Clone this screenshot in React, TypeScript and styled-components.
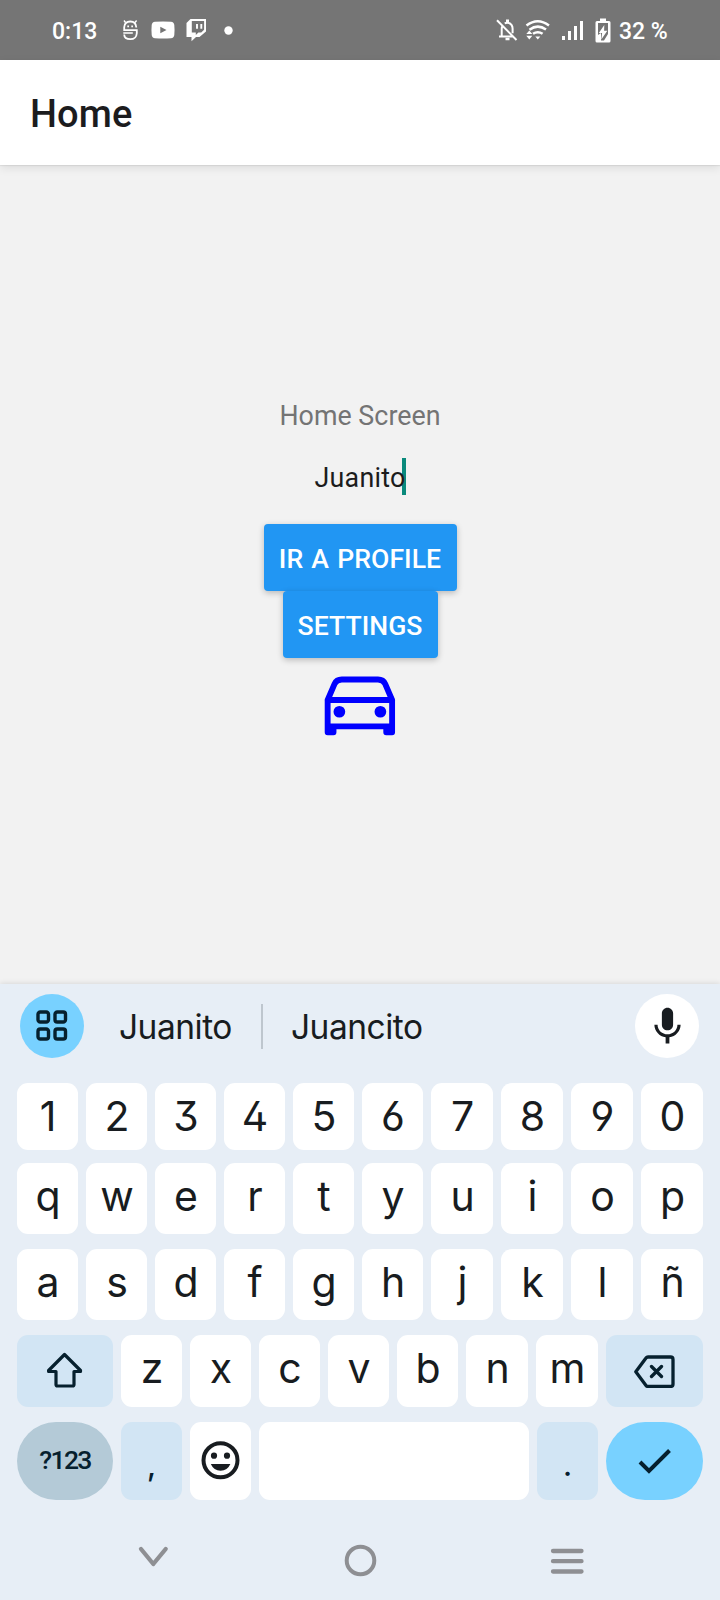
import React from "react";
import styled, { createGlobalStyle } from "styled-components";
import { IoCarOutline } from "react-icons/io5";
import { MdMic } from "react-icons/md";

const GlobalStyle = createGlobalStyle`
  * { box-sizing: border-box; }
  body { margin: 0; background: #f2f2f2; }
  svg { display: block; flex: none; }
`;

const Phone = styled.div`
  width: 720px;
  height: 1600px;
  display: flex;
  flex-direction: column;
  overflow: hidden;
  background: #f2f2f2;
  font-family: Roboto, "Liberation Sans", sans-serif;
`;

const StatusBar = styled.div`
  height: 60px;
  flex: none;
  display: flex;
  align-items: center;
  justify-content: space-between;
  padding: 2px 53px 0 52px;
  background: #757575;
  color: #fff;
  font-size: 23px;
  font-weight: 500;
  white-space: pre;
`;

const StatusGroup = styled.div`
  display: flex;
  align-items: center;
`;

const StatusText = styled.span<{ $width: number; $start?: number }>`
  width: ${(p) => p.$width}px;
  padding-left: ${(p) => p.$start ?? 0}px;
  padding-top: 1px;
  line-height: 28px;
`;

const StatusGlyph = styled.svg<{ $gap: number }>`
  margin-left: ${(p) => p.$gap}px;
  margin-top: -2px;
`;

const Header = styled.header`
  position: relative;
  height: 105px;
  flex: none;
  display: flex;
  align-items: center;
  padding: 2px 30px 0;
  background: #fff;
  box-shadow: 0 1px 1px rgba(0, 0, 0, 0.06), 0 3px 9px rgba(0, 0, 0, 0.09);
`;

const Title = styled.h1`
  margin: 0;
  font-size: 38px;
  font-weight: 500;
  line-height: 48px;
  letter-spacing: 0.15px;
  color: #1c1c1e;
`;

const Content = styled.main`
  height: 819px;
  flex: none;
  display: flex;
  flex-direction: column;
  align-items: center;
  padding-top: 234px;
`;

const Caption = styled.p`
  margin: 0;
  font-size: 26.8px;
  line-height: 35px;
  letter-spacing: 0.04px;
  color: #747474;
`;

const Field = styled.div`
  display: flex;
  align-items: center;
  height: 61px;
  margin: 12px 0 17px;
  font-size: 26.8px;
  letter-spacing: 0.25px;
  color: #1c1c1c;
`;

const FieldText = styled.span`
  position: relative;
  z-index: 1;
  padding-top: 2px;
  line-height: 36px;
`;

const Caret = styled.span`
  width: 4px;
  height: 37px;
  margin-left: -4px;
  background: #0a8a7c;
`;

const ActionButton = styled.button<{ $width: number }>`
  width: ${(p) => p.$width}px;
  height: 67px;
  flex: none;
  padding: 2px 0 0;
  border: 0;
  border-radius: 4px;
  background: #2196f3;
  box-shadow: 0 2px 6px rgba(0, 0, 0, 0.24);
  color: #fff;
  font: 500 26.6px/32px Roboto, sans-serif;
  letter-spacing: 0.05px;
  word-spacing: 1.5px;
  white-space: nowrap;
`;

const CarIcon = styled(IoCarOutline)`
  margin-top: 1px;
  color: #0000ff;
`;

const Keyboard = styled.section`
  position: relative;
  flex: 1;
  display: flex;
  flex-direction: column;
  background: #e7eef6;
  box-shadow: 0 -1px 5px rgba(0, 0, 0, 0.1);
  color: #181c20;
  font-family: Inter, Roboto, sans-serif;
`;

const SuggestionBar = styled.div`
  height: 99px;
  flex: none;
  display: flex;
  align-items: flex-start;
  padding: 10px 21px 0 20px;
`;

const RoundButton = styled.div<{ $color: string }>`
  width: 64px;
  height: 64px;
  flex: none;
  display: flex;
  align-items: center;
  justify-content: center;
  border-radius: 50%;
  background: ${(p) => p.$color};
`;

const Suggestion = styled.span<{ $width: number; $start: number }>`
  width: ${(p) => p.$width}px;
  padding-left: ${(p) => p.$start}px;
  font-size: 33.5px;
  font-weight: 380;
  line-height: 66px;
  letter-spacing: -0.5px;
  white-space: nowrap;
`;

const Divider = styled.span`
  width: 2px;
  height: 45px;
  margin-top: 10px;
  background: #bec6ce;
`;

const Spacer = styled.span`
  flex: 1;
`;

const KeyRow = styled.div<{ $columns: string; $height: number; $after: number }>`
  display: grid;
  grid-template-columns: ${(p) => p.$columns};
  column-gap: 8px;
  height: ${(p) => p.$height}px;
  flex: none;
  margin: 0 17px ${(p) => p.$after}px;
`;

const Key = styled.div<{ $lift?: number; $tone?: "light" | "blue" }>`
  display: flex;
  align-items: center;
  justify-content: center;
  padding-left: 1px;
  padding-bottom: ${(p) => p.$lift ?? 0}px;
  border-radius: 11px;
  background: ${(p) => (p.$tone === "blue" ? "#d2e5f4" : "#fff")};
  font-size: 41px;
  font-weight: 380;
  line-height: 1;
  font-feature-settings: "ss01";
`;

const PunctuationKey = styled(Key)`
  padding: 8px 0 0;
  color: #06202e;
  font-size: 30px;
  font-weight: 500;
`;

const PillKey = styled.div<{ $color: string }>`
  display: flex;
  align-items: center;
  justify-content: center;
  padding-bottom: 3px;
  border-radius: 39px;
  background: ${(p) => p.$color};
  color: #06202e;
  font: 500 26.5px Roboto, sans-serif;
  letter-spacing: -1.6px;
`;

const NavBar = styled.nav`
  flex: 1;
  display: flex;
  justify-content: center;
  gap: 167px;
  padding-top: 40px;
`;

const letterColumns = "repeat(6, 61px) repeat(4, 62px)";

function Letters({ keys, lift }: { keys: string; lift: number }) {
  return (
    <>
      {[...keys].map((k) => (
        <Key key={k} $lift={lift}>{k}</Key>
      ))}
    </>
  );
}

export default function App() {
  return (
    <Phone>
      <GlobalStyle />
      <StatusBar>
        <StatusGroup>
          <StatusText $width={70}>0:13</StatusText>
          <StatusGlyph $gap={0} width="17" height="24" viewBox="0 0 17 24" fill="none" stroke="#fff" strokeWidth="1.800">
            <path d="M14.300 9.500q-.3-6-6-6T2.200 9.300v2.900h12.600v3q-.5 6-6.500 6T2.200 16.500" />
            <path d="M1.300 15h9.500M3.500 4.500 2 2.500M13 4.500l1.600-2" strokeWidth="1.400" />
            <path d="M5.300 8.400h1.700M9.300 8.400h1.700" strokeWidth="1.600" />
          </StatusGlyph>
          <StatusGlyph $gap={12} width="24" height="18" viewBox="0 0 24 18">
            <path fill="#fff" fillRule="evenodd" d="M4 .8Q12 0 20 .8q3 .2 3.300 3.200.5 5 0 10-.3 3-3.300 3.200Q12 18 4 17.200 1 17 .7 14q-.5-5 0-10Q1 1 4 .8ZM9.300 5.700v6.600L15.500 9Z" />
          </StatusGlyph>
          <StatusGlyph $gap={11} width="21" height="24" viewBox="0 0 21 24">
            <path fill="#fff" fillRule="evenodd" d="M4.500 1H20v12.500L13.500 19H10l-4.500 4.300V19H.5V5Zm1.300 1.900v11.600h4v2.600l2.600-2.600h2.800l2.900-2.800V2.900Z" />
            <path stroke="#fff" strokeWidth="1.900" d="M11 6v4.800M15.300 6v4.800" />
          </StatusGlyph>
          <StatusGlyph $gap={17} width="9" height="9" viewBox="0 0 9 9">
            <circle cx="4.500" cy="4.500" r="4.200" fill="#fff" />
          </StatusGlyph>
        </StatusGroup>
        <StatusGroup>
          <StatusGlyph $gap={0} width="22" height="24" viewBox="0 0 22 24" fill="none" stroke="#fff" strokeWidth="2">
            <path d="M1 2.200 20.500 22M3 18.400h14M5.700 18V11q0-2 1-3.700M8.700 5.200q4.500-1.500 7 2 .9 1.500.9 3.500v4.500" />
            <path d="M11.500 1.500v3" strokeWidth="3" />
            <path d="M9.500 21h4" strokeWidth="2.500" />
          </StatusGlyph>
          <StatusGlyph $gap={7} width="26" height="22" viewBox="0 0 26 22" fill="none" stroke="#fff" strokeWidth="2.500">
            <path d="M1.500 6.500Q12.700-2 24 6.500M4.500 10.800q8.200-6.200 16.500-.2M8 14.800q4.800-3.300 9.600 0" />
            <path fill="#fff" stroke="none" d="M10.300 17.500h5L12.800 20.500ZM1.300 15h6L4.300 11.600ZM1.300 16.800h6L4.300 20.600Z" />
          </StatusGlyph>
          <StatusGlyph $gap={10} width="23" height="20" viewBox="0 0 23 20" fill="#fff">
            <path d="M1 16h3v4H1ZM7 11h3v9H7ZM13 6h3v14h-3ZM19 1h3v19h-3Z" />
          </StatusGlyph>
          <StatusGlyph $gap={11} width="16" height="25" viewBox="0 0 16 25">
            <path fill="#fff" d="M5 .5h6V3h3q1.500 0 1.500 1.500V23q0 1.500-1.500 1.500H2Q.5 24.500.5 23V4.500Q.5 3 2 3h3Z" />
            <path fill="#757575" d="M3 5h10v11l-4 6.500H6V15L3 17Z" />
            <path fill="#fff" d="m9.300 7-5.500 8h3.300l-.8 6.500 6-8.700H9.100Z" />
          </StatusGlyph>
          <StatusText $width={56} $start={8}>32 %</StatusText>
        </StatusGroup>
      </StatusBar>

      <Header>
        <Title>Home</Title>
      </Header>

      <Content>
        <Caption>Home Screen</Caption>
        <Field>
          <FieldText>Juanito</FieldText>
          <Caret />
        </Field>
        <ActionButton $width={193}>IR A PROFILE</ActionButton>
        <ActionButton $width={155}>SETTINGS</ActionButton>
        <CarIcon size={93.75} />
      </Content>

      <Keyboard>
        <SuggestionBar>
          <RoundButton $color="#78d1ff">
            <svg width="32" height="32" viewBox="0 0 32 32" fill="none" stroke="#06202e" strokeWidth="3.400">
              <rect x="2" y="2" width="10.500" height="10" rx="2.300" />
              <rect x="19" y="2" width="10.500" height="10" rx="2.300" />
              <rect x="2" y="19" width="10.500" height="10" rx="2.300" />
              <rect x="19" y="19" width="10.500" height="10" rx="2.300" />
            </svg>
          </RoundButton>
          <Suggestion $width={177} $start={35}>Juanito</Suggestion>
          <Divider />
          <Suggestion $width={170} $start={28}>Juancito</Suggestion>
          <Spacer />
          <RoundButton $color="#fff">
            <MdMic size={45} />
          </RoundButton>
        </SuggestionBar>

        <KeyRow $columns={letterColumns} $height={67} $after={13}>
          <Letters keys="1234567890" lift={0} />
        </KeyRow>
        <KeyRow $columns={letterColumns} $height={71} $after={15}>
          <Letters keys="qwertyuiop" lift={4} />
        </KeyRow>
        <KeyRow $columns={letterColumns} $height={71} $after={15}>
          <Letters keys="asdfghjklñ" lift={4} />
        </KeyRow>
        <KeyRow $columns="96px repeat(5, 61px) 62px 62px 97px" $height={72} $after={15}>
          <Key $tone="blue">
            <svg width="38" height="38" viewBox="0 0 38 38" fill="none" stroke="#06202e" strokeWidth="3.200" strokeLinejoin="round">
              <path d="M17.500 2.500 33.500 18.500v1H27V32.500q0 1.500-1.500 1.500h-15Q9 34 9 32.500V19.500H1.600v-1Z" />
            </svg>
          </Key>
          <Letters keys="zxcvbnm" lift={6} />
          <Key $tone="blue">
            <svg width="42" height="34" viewBox="0 0 42 34" fill="none" stroke="#06202e" strokeWidth="3.300" strokeLinejoin="round" strokeLinecap="round">
              <path d="M14 3h22.500Q39 3 39 5.500V30q0 2.500-2.500 2.500H14q-1.300 0-2-1L1.800 17.800 12 4q.7-1 2-1ZM17.500 12.500l10 10M27.500 12.500l-10 10" />
            </svg>
          </Key>
        </KeyRow>
        <KeyRow $columns="96px 61px 61px 270px 61px 97px" $height={78} $after={0}>
          <PillKey $color="#b4cad7">?123</PillKey>
          <PunctuationKey $tone="blue">,</PunctuationKey>
          <Key>
            <svg width="40" height="40" viewBox="0 0 40 40" fill="none">
              <circle cx="19.500" cy="19.300" r="17" stroke="#181c20" strokeWidth="4" />
              <circle cx="13" cy="14.700" r="3.100" fill="#181c20" />
              <circle cx="26" cy="14.700" r="3.100" fill="#181c20" />
              <path d="M9.800 23h19.600q-3 6.700-9.800 6.700T9.800 23Z" fill="#181c20" />
            </svg>
          </Key>
          <Key />
          <PunctuationKey $tone="blue">.</PunctuationKey>
          <PillKey $color="#78d1ff">
            <svg width="34" height="28" viewBox="0 0 34 28" fill="none" stroke="#06202e" strokeWidth="4">
              <path d="m2 16 9 9L31.500 4.500" />
            </svg>
          </PillKey>
        </KeyRow>

        <NavBar>
          <svg width="40" height="40" viewBox="0 0 40 40" fill="none" stroke="#8e8f93" strokeWidth="4.300" strokeLinecap="round" strokeLinejoin="round">
            <path d="m8 9 12.300 15L32.700 9" />
          </svg>
          <svg width="40" height="40" viewBox="0 0 40 40" fill="none" stroke="#8e8f93" strokeWidth="4">
            <circle cx="20.500" cy="20.500" r="13.800" />
          </svg>
          <svg width="40" height="40" viewBox="0 0 40 40" fill="none" stroke="#8e8f93" strokeWidth="4.300" strokeLinecap="round">
            <path d="M6 11h28.500M6 21.200h28.500M6 31.500h28.500" />
          </svg>
        </NavBar>
      </Keyboard>
    </Phone>
  );
}
